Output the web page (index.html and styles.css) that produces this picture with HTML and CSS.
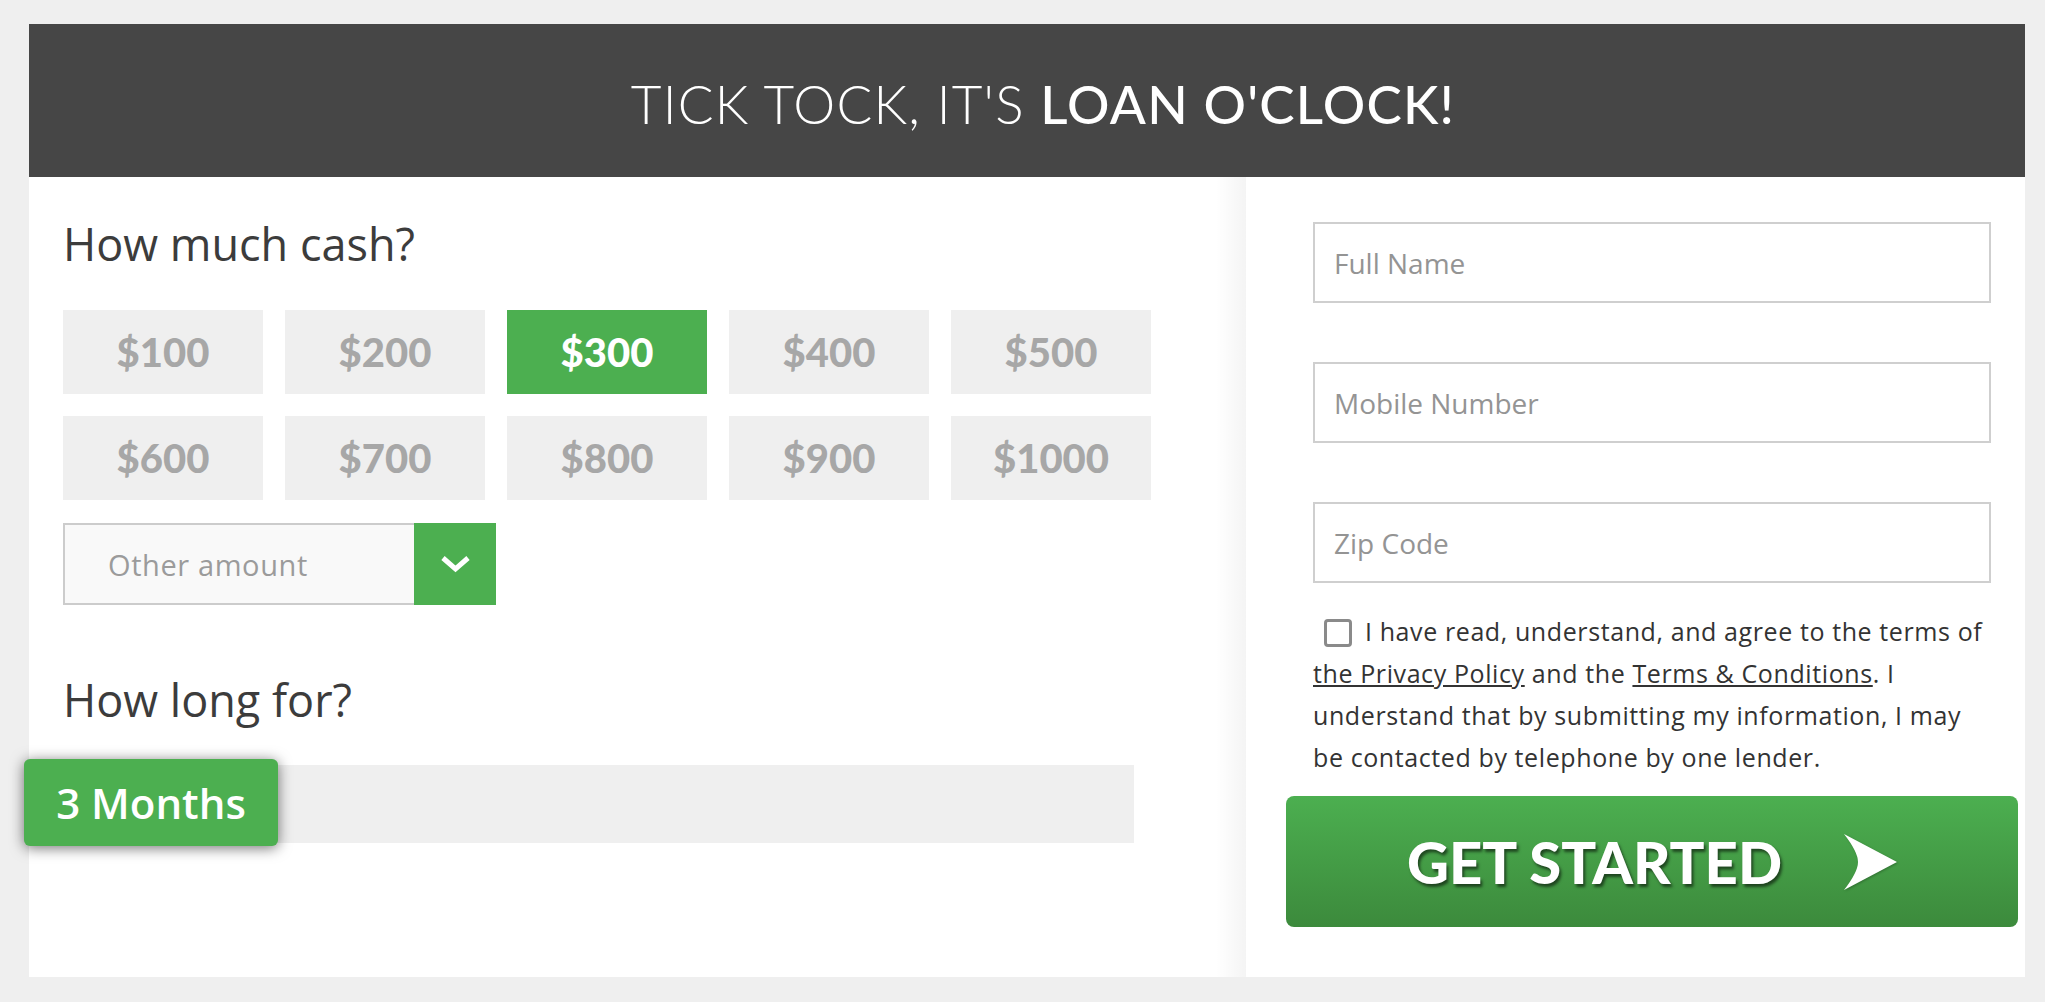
FILE: index.html
```html
<!DOCTYPE html>
<html lang="en">
<head>
<meta charset="utf-8">
<title>Loan O'Clock</title>
<link rel="stylesheet" href="styles.css">
</head>
<body>
<div class="card">
  <header class="hero">
    <h1 class="hero-title"><span class="hero-light">TICK TOCK, IT'S </span><span class="hero-bold">LOAN O'CLOCK!</span></h1>
  </header>
  <div class="content">
    <section class="left">
      <h2 class="q-title">How much cash?</h2>
      <div class="amounts">
        <button class="amt">$100</button>
        <button class="amt">$200</button>
        <button class="amt amt-on">$300</button>
        <button class="amt">$400</button>
        <button class="amt">$500</button>
        <button class="amt">$600</button>
        <button class="amt">$700</button>
        <button class="amt">$800</button>
        <button class="amt">$900</button>
        <button class="amt">$1000</button>
      </div>
      <div class="other">
        <div class="other-field">Other amount</div>
        <div class="other-toggle">
          <svg width="31" height="19" viewBox="0 0 31 19"><path d="M3 3 L15.5 14 L28 3" fill="none" stroke="#fff" stroke-width="5" stroke-linecap="butt" stroke-linejoin="miter"/></svg>
        </div>
      </div>
      <h2 class="q-title q-long">How long for?</h2>
      <div class="slider">
        <div class="track"></div>
        <div class="bubble">3 Months</div>
      </div>
    </section>
    <section class="right">
      <input class="field" type="text" placeholder="Full Name" aria-label="Full Name">
      <input class="field" type="text" placeholder="Mobile Number" aria-label="Mobile Number">
      <input class="field" type="text" placeholder="Zip Code" aria-label="Zip Code">
      <p class="terms"><span class="check"></span><span>I have read, understand, and agree to the terms of</span> <a href="#">the Privacy Policy</a> <span>and the</span> <a href="#">Terms &amp; Conditions</a><span>. I</span> <span>understand that by submitting my information, I may</span> <span class="nowrap">be contacted by telephone by one lender.</span></p>
      <button class="go">
        <span class="go-text">GET STARTED</span>
        <svg class="go-arrow" width="53" height="56" viewBox="0 0 53 56"><path d="M0 0 L53 28 L0 56 Q14 38 14 28 Q14 18 0 0 Z" fill="#fff"/></svg>
      </button>
    </section>
  </div>
</div>
</body>
</html>
```
FILE: styles.css
```css
html, body {
  margin: 0;
  padding: 0;
}
body {
  background: #efefef;
  font-family: "Open Sans", Lato, "Liberation Sans", sans-serif;
  color: #3c3c3c;
}
.card {
  width: 1996px;
  margin: 24px 0 0 29px;
  background: #fff;
  height: 953px;
}
.hero {
  height: 153px;
  box-sizing: border-box;
  padding: 6px 0 0 32px;
  background: #464646;
  display: flex;
  align-items: center;
  justify-content: center;
}
.hero-title {
  margin: 0;
  color: #fff;
  font-family: Lato, "Open Sans", sans-serif;
  font-size: 53px;
  font-weight: 400;
  letter-spacing: 1.2px;
}
.hero-light { font-weight: 300; }
.hero-bold { font-weight: 500; }

.content {
  display: grid;
  grid-template-columns: 1217px 779px;
  height: 800px;
}
.left {
  padding: 40px 0 0 34px;
  background: linear-gradient(to right, rgba(0,0,0,0) calc(100% - 30px), rgba(0,0,0,0.045));
}
.q-title {
  margin: 0;
  font-size: 45px;
  font-weight: 400;
  line-height: 54px;
  color: #3c3c3c;
}
.amounts {
  margin-top: 39px;
  display: grid;
  grid-template-columns: repeat(5, 200px);
  grid-auto-rows: 84px;
  gap: 22px;
}
.amt {
  border: 0;
  margin: 0;
  padding: 0;
  background: #efefef;
  color: #a7a7a7;
  font-family: Lato, "Open Sans", sans-serif;
  font-weight: 900;
  font-size: 40px;
}
.amt-on {
  background: #4caf50;
  color: #fff;
}
.other {
  margin-top: 23px;
  display: flex;
  width: 433px;
  height: 82px;
}
.other-field {
  flex: 1;
  border: 2px solid #cccccc;
  border-right: 0;
  background: #f9f9f9;
  display: flex;
  align-items: center;
  padding-left: 43px;
  font-size: 29px;
  letter-spacing: 0.6px;
  color: #9b9b9b;
}
.other-toggle {
  width: 82px;
  background: #4caf50;
  display: flex;
  align-items: center;
  justify-content: center;
}
.q-long {
  margin-top: 68px;
}
.slider {
  position: relative;
  margin-top: 38px;
  width: 1071px;
  height: 78px;
}
.track {
  height: 78px;
  background: #efefef;
}
.bubble {
  position: absolute;
  left: -39px;
  top: -6px;
  width: 254px;
  height: 87px;
  box-sizing: border-box;
  background: #4caf50;
  border-radius: 6px;
  box-shadow: 0 2px 14px rgba(0,0,0,0.55);
  color: #fff;
  font-size: 42px;
  font-weight: 600;
  display: flex;
  align-items: center;
  justify-content: center;
}

.right {
  padding: 45px 34px 0 67px;
  display: flex;
  flex-direction: column;
}
.field {
  display: block;
  box-sizing: border-box;
  width: 678px;
  height: 81px;
  margin: 0 0 59px 0;
  border: 2px solid #cfcfcf;
  background: #fff;
  padding: 0 0 0 19px;
  font-family: "Open Sans", Lato, sans-serif;
  font-size: 28px;
  color: #333;
  outline: none;
}
.field:last-of-type {
  margin-bottom: 0;
}
.field::placeholder {
  color: #949494;
}
.terms {
  margin: 27px 0 0 0;
  font-size: 25px;
  letter-spacing: 0.6px;
  line-height: 42px;
  color: #333;
}
.terms a {
  color: #333;
  text-decoration: underline;
  white-space: nowrap;
}
.nowrap {
  white-space: nowrap;
}
.check {
  display: inline-block;
  box-sizing: border-box;
  width: 28px;
  height: 28px;
  border: 3px solid #8a8a8a;
  border-radius: 4px;
  margin: 0 13px 0 11px;
  vertical-align: -6px;
}
.go {
  margin: 18px -27px 0 -27px;
  height: 131px;
  border: 0;
  border-radius: 8px;
  background: linear-gradient(to bottom, #4caf50, #3c8a3c);
  display: flex;
  align-items: center;
  justify-content: center;
  gap: 62px;
  padding: 0;
  cursor: pointer;
}
.go-text {
  font-family: Lato, "Open Sans", sans-serif;
  font-weight: 900;
  font-size: 58px;
  color: #fff;
  text-shadow: 2px 3px 3px rgba(0,0,0,0.55);
}
.go-arrow {
  filter: drop-shadow(1px 1px 1px rgba(0,0,0,0.25));
}
```
